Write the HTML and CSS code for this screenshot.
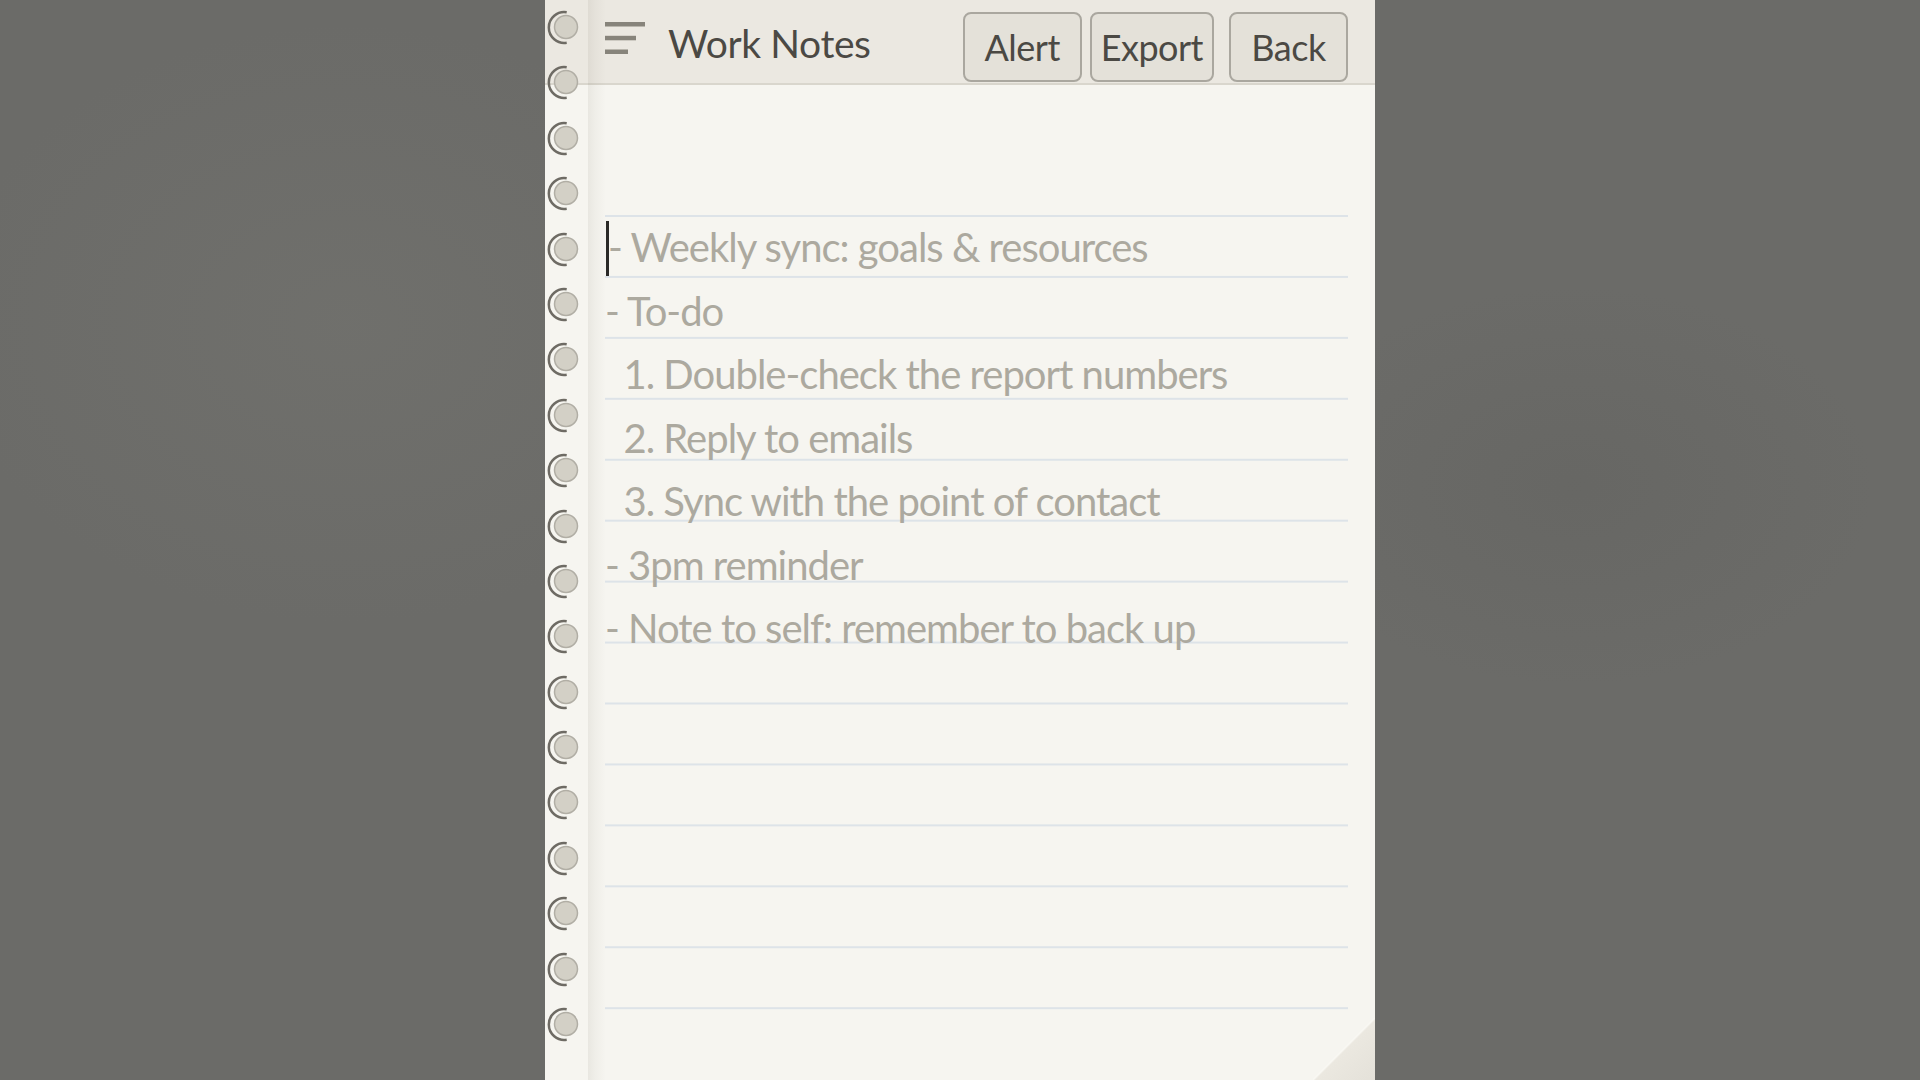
FILE: index.html
```html
<!DOCTYPE html>
<html lang="en">
<head>
    <meta charset="UTF-8">
    <meta name="viewport" content="width=device-width, initial-scale=1.0">
    <title>Work Notes</title>
    <link rel="stylesheet" href="styles.css">
</head>
<body>

    <div class="notebook">
        <div class="rings" id="rings"></div>

        <header class="header">
            <svg class="menu-icon" width="40" height="32" viewBox="0 0 40 32">
                <rect x="0" y="0" width="40" height="4.5" fill="#87847b"/>
                <rect x="0" y="13.8" width="31" height="4.5" fill="#87847b"/>
                <rect x="0" y="27.5" width="23" height="4.5" fill="#87847b"/>
            </svg>
            <h1 class="title">Work Notes</h1>
            <div class="actions">
                <button class="btn">Alert</button>
                <button class="btn btn-export">Export</button>
                <button class="btn btn-back">Back</button>
            </div>
        </header>

        <div class="sheet">
            <div class="note-line"><span class="caret"></span>- Weekly sync: goals &amp; resources</div>
            <div class="note-line">- To-do</div>
            <div class="note-line">  1. Double-check the report numbers</div>
            <div class="note-line">  2. Reply to emails</div>
            <div class="note-line">  3. Sync with the point of contact</div>
            <div class="note-line">- 3pm reminder</div>
            <div class="note-line">- Note to self: remember to back up</div>
        </div>

        <div class="fold"></div>
    </div>

    <script>
        const ringsDiv = document.getElementById('rings');
        const ring = '<svg class="ring" width="40" height="40" viewBox="0 0 40 40">' +
            '<path d="M21.7 5.3 A15.4 15.4 0 1 0 21.7 35.7" fill="none" stroke="#6e6b64" stroke-width="2.5"/>' +
            '<circle cx="21" cy="20" r="11.5" fill="#d3d0c6" stroke="#b1aea5" stroke-width="1.5"/>' +
            '</svg>';

        for (let i = 0; i < 19; i++) {
            ringsDiv.insertAdjacentHTML('beforeend', ring);
        }
    </script>

</body>
</html>
```

FILE: styles.css
```css
/* General Styles */
body {
    margin: 0;
    padding: 0;
    height: 1080px;
    overflow: hidden;
    display: flex;
    justify-content: center;
    font-family: 'Lato', 'Open Sans', sans-serif;
    background-color: #6b6b68;
    background-image:
        radial-gradient(ellipse 400px 300px at 18% 30%, rgba(120, 120, 115, 0.35), transparent),
        radial-gradient(ellipse 300px 200px at 82% 45%, rgba(95, 95, 92, 0.35), transparent);
}

.notebook {
    position: relative;
    width: 830px;
    height: 1080px;
    background-color: #f6f5f0;
    overflow: hidden;
}

/* binding shadow next to the rings */
.notebook::before {
    content: "";
    position: absolute;
    top: 0;
    bottom: 0;
    left: 43px;
    width: 18px;
    background: linear-gradient(to right, rgba(60, 50, 30, 0.07), rgba(60, 50, 30, 0.035) 40%, rgba(60, 50, 30, 0));
    z-index: 1;
    pointer-events: none;
}

/* Spiral rings */
.rings {
    position: absolute;
    top: 7px;
    left: 0;
    display: flex;
    flex-direction: column;
    gap: 15.4px;
    z-index: 2;
}

.ring {
    display: block;
}

/* Header */
.header {
    display: flex;
    align-items: flex-start;
    height: 83px;
    padding: 0 27px 0 60px;
    background-color: #ebe8e1;
    border-bottom: 2px solid #d9d6cd;
}

.menu-icon {
    margin-top: 22px;
    flex-shrink: 0;
}

.title {
    margin: 23px 0 0 23px;
    font-size: 39px;
    line-height: 40px;
    font-weight: 400;
    letter-spacing: -0.4px;
    color: #4b4944;
}

.actions {
    display: flex;
    margin-left: auto;
    margin-top: 12px;
}

.btn {
    height: 70px;
    min-width: 119px;
    padding: 0 9px;
    font-family: 'Lato', 'Open Sans', sans-serif;
    font-size: 36px;
    letter-spacing: -0.5px;
    color: #4b4944;
    background-color: #e4e1d9;
    border: 2px solid #aaa79f;
    border-radius: 8px;
}

.btn-export {
    margin-left: 8px;
}

.btn-back {
    margin-left: 15px;
}

/* Lined sheet */
.sheet {
    box-sizing: border-box;
    margin: 127px 27px 0 60px;
    padding-top: 4px;
    height: 798px;
    background-image: linear-gradient(#dde3e8 2px, transparent 2px);
    background-size: 100% 60.95px;
    background-position: 0 3px;
    background-repeat: repeat-y;
}

.note-line {
    white-space: pre;
    font-size: 40px;
    line-height: 63.5px;
    letter-spacing: -1px;
    color: #aca99f;
}

.caret {
    display: inline-block;
    width: 3px;
    height: 55px;
    margin: 0 -1px 0 1px;
    vertical-align: -14px;
    background-color: #2b2a27;
}

/* Dog-eared corner */
.fold {
    position: absolute;
    right: 0;
    bottom: 0;
    width: 62px;
    height: 62px;
    background: linear-gradient(to bottom right, rgba(0, 0, 0, 0) 49%, #fbfaf6 49.6%, #ebe8e0 52%, #e4e1d9 100%);
}
```
